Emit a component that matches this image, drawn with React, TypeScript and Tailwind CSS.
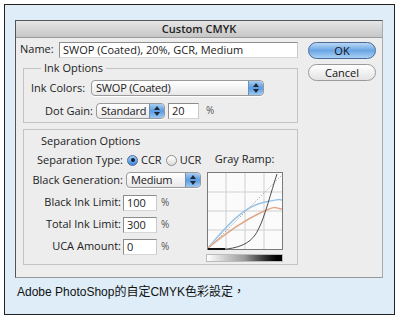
import React from 'react';

const font = { fontFamily: '"Open Sans", "DejaVu Sans", sans-serif' };

const Stepper = () => (
  <div className="w-[15px] h-full rounded-r-[4px] bg-gradient-to-b from-[#a9cdf0] via-[#5b9be0] to-[#9cc8f2] border-l border-[#6d8fb8] flex flex-col items-center justify-center gap-[2px] shrink-0">
    <svg width="6" height="4" viewBox="0 0 6 4"><path d="M0 4 L3 0 L6 4 Z" fill="#1d2a3a" /></svg>
    <svg width="6" height="4" viewBox="0 0 6 4"><path d="M0 0 L3 4 L6 0 Z" fill="#1d2a3a" /></svg>
  </div>
);

const Select = ({ value, w }: { value: string; w: string }) => (
  <div className={`${w} h-[16px] flex rounded-[4px] border border-[#9a9a9a] bg-gradient-to-b from-white to-[#e8e8e8] shadow-[0_1px_0_#fff]`}>
    <div className="flex-1 pl-[4px] text-[11px] leading-[14px] tracking-[-0.2px] text-[#222] whitespace-nowrap">{value}</div>
    <Stepper />
  </div>
);

const Field = ({ value, w }: { value: string; w: string }) => (
  <div className={`${w} h-[16px] bg-white border border-[#8c8c8c] border-r-[#c9c9c9] border-b-[#d6d6d6] pl-[3px] text-[11px] leading-[14px] text-[#222] whitespace-nowrap`}>
    {value}
  </div>
);

const Radio = ({ on }: { on?: boolean }) => (
  <div className={`w-[11px] h-[11px] rounded-full border ${on ? 'border-[#4a6e9a] bg-gradient-to-b from-[#a6cdf2] to-[#3f86d8]' : 'border-[#8d8d8d] bg-gradient-to-b from-white to-[#dedede]'} flex items-center justify-center`}>
    {on && <div className="w-[4px] h-[4px] rounded-full bg-[#102040]" />}
  </div>
);

const LimitRow = ({ label, value }: { label: string; value: string }) => (
  <div className="flex items-center h-[16px]">
    <div className="w-[95px] text-right pr-[2px]">{label}</div>
    <Field value={value} w="w-[34px]" />
    <div className="ml-[4px] text-[10px] text-[#555]">%</div>
  </div>
);

const GrayRamp = () => (
  <svg width="76" height="78" viewBox="0 0 76 78">
    <rect x="0.5" y="0.5" width="75" height="77" fill="#fbfbfb" stroke="#7a7a7a" />
    {[19, 38, 57].map((v) => (
      <g key={v}>
        <line x1={v} y1="1" x2={v} y2="77" stroke="#cfcfcf" />
        <line x1="1" y1={v + 1} x2="75" y2={v + 1} stroke="#cfcfcf" />
      </g>
    ))}
    <path d="M1 77 L75 3" stroke="#9a9a9a" strokeWidth="0.8" strokeDasharray="1.5 1.5" fill="none" />
    <path d="M1 76 C 18 56, 36 34, 58 30 S 70 28, 75 28" stroke="#98c2e6" strokeWidth="1.4" fill="none" />
    <path d="M1 76 C 20 60, 38 48, 55 40 S 68 37, 75 37" stroke="#e1a888" strokeWidth="1.4" fill="none" />
    <path d="M1 77 L20 77 C 35 75, 46 70, 52 56 C 58 44, 64 20, 70 2" stroke="#3a3a3a" strokeWidth="0.9" fill="none" />
    <path d="M1 77 L18 77" stroke="#111" strokeWidth="2" />
  </svg>
);

const App = () => {
  return (
    <div className="w-[400px] h-[320px] bg-white p-[4px]" style={font}>
      <div className="w-[391px] h-[311px] border border-[#222] bg-[#deedf8] pl-[10px] pt-[15px]">
        <div className="w-[368px] h-[258px] bg-[#ededed] border border-[#555] border-r-[#aaa] border-b-[#999] flex flex-col">
          <div className="h-[17px] bg-gradient-to-b from-[#e6e6e6] to-[#c6c6c6] border-b border-[#9b9b9b] text-center text-[11px] leading-[16px] font-semibold text-[#222]">
            Custom CMYK
          </div>
          <div className="flex flex-1 text-[11px] text-[#222]">
            <div className="w-[283px] pl-[4px] pt-[3px]">
              <div className="flex items-center h-[17px]">
                <div className="w-[39px]">Name:</div>
                <Field value="SWOP (Coated), 20%, GCR, Medium" w="w-[239px]" />
              </div>
              <fieldset className="ml-[3px] mt-[4px] w-[275px] h-[61px] border border-[#c3c3c3] pl-[7px]">
                <legend className="ml-[10px] px-[3px] text-[11px] leading-[12px]">Ink Options</legend>
                <div className="flex items-center mt-[6px]">
                  <div className="w-[60px]">Ink Colors:</div>
                  <Select value="SWOP (Coated)" w="w-[173px]" />
                </div>
                <div className="flex items-center mt-[6px]">
                  <div className="w-[65px] text-right pr-[3px]">Dot Gain:</div>
                  <Select value="Standard" w="w-[69px]" />
                  <div className="ml-[3px]"><Field value="20" w="w-[31px]" /></div>
                  <div className="ml-[7px] text-[10px] text-[#555]">%</div>
                </div>
              </fieldset>
              <div className="ml-[3px] mt-[6px] w-[275px] h-[136px] border border-[#c3c3c3] flex">
                <div className="w-[178px] pl-[4px]">
                  <div className="pl-[13px] pt-[4px] leading-[14px]">Separation Options</div>
                  <div className="flex items-center mt-[5px] h-[14px]">
                    <div className="w-[99px] text-right pr-[4px]">Separation Type:</div>
                    <Radio on />
                    <div className="ml-[3px]">CCR</div>
                    <div className="ml-[4px]"><Radio /></div>
                    <div className="ml-[3px]">UCR</div>
                  </div>
                  <div className="flex items-center mt-[5px]">
                    <div className="w-[98px] text-right pr-[3px]">Black Generation:</div>
                    <Select value="Medium" w="w-[75px]" />
                  </div>
                  <div className="flex flex-col gap-[6px] mt-[6px]">
                    <LimitRow label="Black Ink Limit:" value="100" />
                    <LimitRow label="Total Ink Limit:" value="300" />
                    <LimitRow label="UCA Amount:" value="0" />
                  </div>
                </div>
                <div className="flex flex-col items-center pt-[22px] pl-[4px]">
                  <div className="leading-[14px] mb-[6px]">Gray Ramp:</div>
                  <GrayRamp />
                  <div className="mt-[4px] w-[77px] h-[8px] border border-[#bbb] bg-gradient-to-r from-white via-[#9a9a9a] to-black" />
                </div>
              </div>
            </div>
            <div className="flex flex-col gap-[5px] pl-[9px] pt-[4px]">
              <div className="w-[68px] h-[17px] rounded-full border border-[#4a6a95] bg-gradient-to-b from-[#b9d8f5] via-[#6aa5e4] to-[#a9d1f6] text-center text-[11px] leading-[15px] text-[#111]">
                OK
              </div>
              <div className="w-[68px] h-[17px] rounded-full border border-[#9a9a9a] bg-gradient-to-b from-white to-[#e3e3e3] text-center text-[11px] leading-[15px] text-[#111]">
                Cancel
              </div>
            </div>
          </div>
        </div>
        <div className="mt-[6px] pl-[2px] text-[12px] leading-[16px] text-[#111]" style={{ fontFamily: '"Liberation Sans", "Noto Sans CJK TC", sans-serif' }}>
          Adobe PhotoShop的自定CMYK色彩設定，
        </div>
      </div>
    </div>
  );
};

export default App;
